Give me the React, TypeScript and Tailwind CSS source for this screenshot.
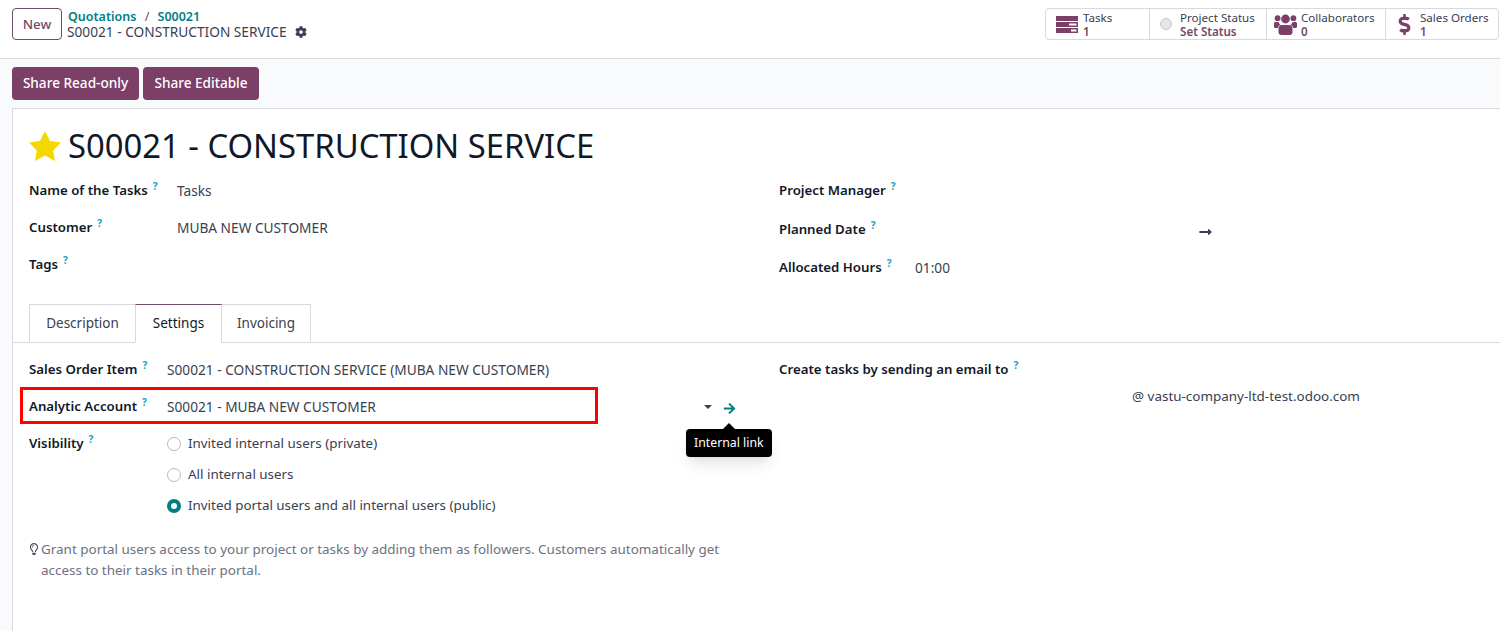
import { FaArrowRight, FaCog, FaDollarSign, FaLongArrowAltRight, FaRegLightbulb } from "react-icons/fa";
import type { ReactNode } from "react";

function Help() {
  return <sup className="relative -top-[5px] ml-[5px] text-[10px] font-bold leading-none text-[#0ea5c6]">?</sup>;
}

function Label({ children }: { children: ReactNode }) {
  return (
    <span className="block text-[13.25px] font-semibold leading-[20px] text-[#111827] whitespace-nowrap">
      {children}
      <Help />
    </span>
  );
}

function Stat({ icon, title, value, width, gap }: { icon: ReactNode; title: string; value: string; width: string; gap: string }) {
  return (
    <div className={`flex items-center border-r border-[#d8dadd] last:border-r-0 ${width} ${gap}`}>
      <div className="flex justify-center">{icon}</div>
      <div className="flex flex-col pt-[2px] text-[11.6px] leading-[14px] whitespace-nowrap">
        <span className="text-[#374151]">{title}</span>
        <span className="font-semibold text-[#714B67]">{value}</span>
      </div>
    </div>
  );
}

function TasksIcon() {
  return (
    <svg width="22" height="17" viewBox="0 0 22 17" fill="#7c3f68">
      <path d="M0 0h22v5H0z" />
      <path fillRule="evenodd" d="M0 6h22v5H0zM13 7.5v2h7.5v-2z" />
      <path fillRule="evenodd" d="M0 12h22v5H0zM15 13.5v2h5.5v-2z" />
    </svg>
  );
}

function UsersIcon() {
  return (
    <svg width="23" height="21" viewBox="0 0 23 21" fill="#7c3f68">
      <circle cx="3.6" cy="4.2" r="2.9" />
      <circle cx="19.4" cy="4.2" r="2.9" />
      <circle cx="11.5" cy="5" r="4.4" />
      <path d="M0 9.5c0-1 .8-1.6 1.8-1.6h2.6c.4 1 1 2 2 2.6-1.4.8-2.2 2-2.6 3.5H1.6C.7 14 0 13.3 0 12.4z" />
      <path d="M23 9.5c0-1-.8-1.6-1.8-1.6h-2.6c-.4 1-1 2-2 2.6 1.4.8 2.2 2 2.6 3.5h2.2c.9 0 1.6-.7 1.6-1.6z" />
      <path d="M7.6 11h7.8c2 0 3.1 1.6 3.1 3.6v3.6c0 1.6-1.2 2.8-2.8 2.8H7.3c-1.6 0-2.8-1.2-2.8-2.8v-3.6c0-2 1.1-3.6 3.1-3.6z" />
    </svg>
  );
}

function StarIcon() {
  return (
    <svg width="32" height="30" viewBox="0 0 32 30" fill="#f5d800">
      <polygon points="16,0 21,10 32,11.4 24.2,19.4 26,30 16,24.6 6,30 7.8,19.4 0,11.4 11,10" />
    </svg>
  );
}

function Radio({ checked, label }: { checked?: boolean; label: string }) {
  return (
    <div className="flex h-[31px] items-center gap-[7px]">
      {checked ? (
        <span className="h-[14px] w-[14px] rounded-full border-[4px] border-[#017e84] bg-white" />
      ) : (
        <span className="h-[14px] w-[14px] rounded-full border border-[#b5b8bd] bg-white" />
      )}
      <span className="text-[13.4px] text-[#374151]">{label}</span>
    </div>
  );
}

export default function App() {
  return (
    <div className="h-[631px] w-[1500px] overflow-hidden bg-[#f9fafb] font-['Noto_Sans',sans-serif] text-[#374151]">
      <header className="flex h-[59px] items-start justify-between border-b border-[#d8dadd] bg-white pl-3 pr-px pt-2">
        <div className="flex items-center gap-[6px]">
          <button className="h-[32px] w-[50px] rounded-[4px] border border-[#714B67] text-[13.4px] font-medium text-[#714B67]">New</button>
          <div className="flex flex-col">
            <div className="h-[16px] text-[12.5px] font-semibold leading-[18px] text-[#017e84]">
              Quotations <span className="mx-[5px] font-normal text-[#4b5563]">/</span> S00021
            </div>
            <div className="-ml-px flex items-center gap-[8px] text-[13.7px] leading-[16px] text-[#374151]">
              S00021 - CONSTRUCTION SERVICE <FaCog className="h-[12px] w-[12px]" />
            </div>
          </div>
        </div>
        <div className="flex h-[32px] w-[454px] rounded-[4px] border border-[#d8dadd]">
          <Stat width="w-[104px] pl-[10px]" gap="gap-[5px]" icon={<TasksIcon />} title="Tasks" value="1" />
          <Stat
            width="w-[117px] pl-[10px]"
            gap="gap-[8px]"
            icon={<span className="h-[12px] w-[12px] rounded-full border border-[#c5c7cb] bg-[#e5e7eb]" />}
            title="Project Status"
            value="Set Status"
          />
          <Stat width="w-[119px] pl-[7px]" gap="gap-[4px]" icon={<UsersIcon />} title="Collaborators" value="0" />
          <Stat width="flex-1 pl-[12px]" gap="gap-[9px]" icon={<FaDollarSign className="h-[21px] w-[13px] text-[#7c3f68]" />} title="Sales Orders" value="1" />
        </div>
      </header>

      <div className="flex h-[49px] gap-[4px] pl-3 pt-2">
        <button className="h-[33px] w-[127px] rounded-[4px] bg-[#7c3f68] text-[13.6px] font-medium text-white">Share Read-only</button>
        <button className="h-[33px] w-[116px] rounded-[4px] bg-[#7c3f68] text-[13.6px] font-medium text-white">Share Editable</button>
      </div>

      <main className="relative ml-3 h-[523px] border-l border-t border-[#d8dadd] bg-white">
        <div className="flex h-[65px] items-center pl-4 pt-[8px]">
          <StarIcon />
          <h1 className="ml-[7px] text-[32.8px] leading-[40px] text-[#111827] whitespace-nowrap">S00021 - CONSTRUCTION SERVICE</h1>
        </div>

        <div className="grid h-[130px] grid-cols-[750px_1fr] pl-4">
          <div className="flex flex-col pt-[6px]">
            <div className="flex h-[37px] items-start">
              <div className="w-[148px]"><Label>Name of the Tasks</Label></div>
              <span className="pt-[1px] text-[13.7px]">Tasks</span>
            </div>
            <div className="flex h-[37px] items-start">
              <div className="w-[148px]"><Label>Customer</Label></div>
              <span className="pt-[1px] text-[13.7px]">MUBA NEW CUSTOMER</span>
            </div>
            <div className="flex h-[37px] items-start">
              <div className="w-[148px]"><Label>Tags</Label></div>
            </div>
          </div>
          <div className="flex flex-col pt-[6px]">
            <div className="h-[39px]"><Label>Project Manager</Label></div>
            <div className="flex h-[38px] items-start">
              <div className="w-[419px]"><Label>Planned Date</Label></div>
              <FaLongArrowAltRight className="mt-[6px] h-[14px] w-[15px] text-[#374151]" />
            </div>
            <div className="flex items-start">
              <div className="w-[136px]"><Label>Allocated Hours</Label></div>
              <span className="pt-[1px] text-[13.7px]">01:00</span>
            </div>
          </div>
        </div>

        <div className="flex h-[39px] border-b border-[#d8dadd] pl-4 text-[13.5px]">
          <div className="mb-[-1px] flex h-[39px] w-[106px] items-center justify-center border border-r-0 border-[#d8dadd] pb-px">Description</div>
          <div className="relative z-10 mb-[-1px] flex h-[39px] w-[87px] items-center justify-center border border-b-white border-[#d8dadd] border-t-[#714B67] bg-white pb-px text-[#111827]">Settings</div>
          <div className="mb-[-1px] flex h-[39px] w-[89px] items-center justify-center border border-l-0 border-[#d8dadd] pb-px">Invoicing</div>
        </div>

        <div className="grid grid-cols-[750px_1fr] pl-4 pt-[16px]">
          <div className="flex flex-col">
            <div className="flex h-[37px] items-start">
              <div className="w-[138px]"><Label>Sales Order Item</Label></div>
              <span className="pt-[1px] text-[13.7px] whitespace-nowrap">S00021 - CONSTRUCTION SERVICE (MUBA NEW CUSTOMER)</span>
            </div>
            <div className="flex h-[37px] w-[707px] items-start">
              <div className="w-[138px]"><Label>Analytic Account</Label></div>
              <span className="flex-1 pt-[1px] text-[13.7px]">S00021 - MUBA NEW CUSTOMER</span>
              <span className="mt-[9px] h-0 w-0 border-x-[4px] border-t-[4px] border-x-transparent border-t-[#374151]" />
              <FaArrowRight className="ml-[11px] mt-[6px] h-[13px] w-[13px] text-[#017e84]" />
            </div>
            <div className="flex items-start">
              <div className="w-[138px]"><Label>Visibility</Label></div>
              <div className="-mt-[5px] flex flex-col">
                <Radio label="Invited internal users (private)" />
                <Radio label="All internal users" />
                <Radio checked label="Invited portal users and all internal users (public)" />
              </div>
            </div>
            <div className="mt-[18px] flex w-[700px] items-start text-[13.45px] leading-[21px] text-[#6b7280]">
              <FaRegLightbulb className="mt-[4px] mr-[2px] h-[12px] w-[10px] shrink-0 text-[#4b5563]" />
              <p>Grant portal users access to your project or tasks by adding them as followers. Customers automatically get access to their tasks in their portal.</p>
            </div>
          </div>
          <div className="flex flex-col">
            <Label>Create tasks by sending an email to</Label>
            <div className="ml-[353px] mt-[7px] text-[13.45px] whitespace-nowrap">@ vastu-company-ltd-test.odoo.com</div>
          </div>
        </div>

        <div className="absolute left-[7px] top-[278px] h-[37px] w-[578px] border-[3px] border-[#ff0000]" />

        <div className="absolute left-[673px] top-[320px] rounded-[4px] bg-black px-2 py-[6px] text-[12.3px] leading-[16px] text-white shadow-lg">
          <span className="absolute -top-[6px] left-1/2 h-0 w-0 -translate-x-1/2 border-x-[7px] border-b-[7px] border-x-transparent border-b-black" />
          Internal link
        </div>
      </main>
    </div>
  );
}
